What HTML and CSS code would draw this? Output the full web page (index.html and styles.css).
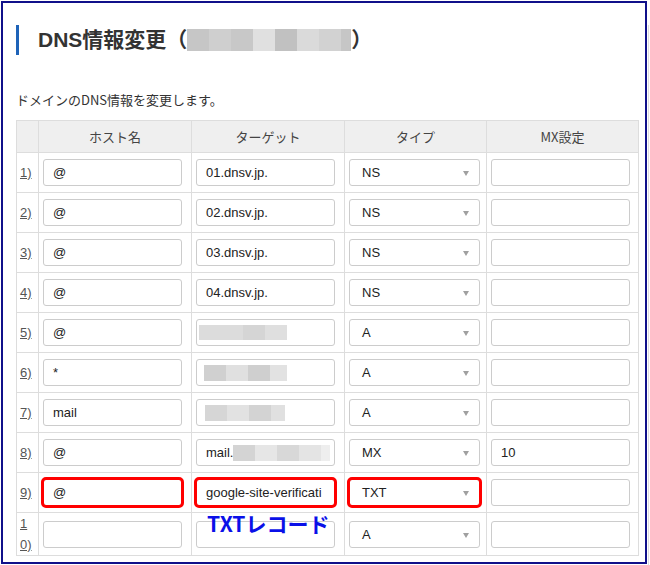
FILE: index.html
```html
<!DOCTYPE html>
<html lang="ja">
<head>
<meta charset="utf-8">
<title>DNS情報変更</title>
<link rel="stylesheet" href="styles.css">
</head>
<body>
<div class="page">
  <h1 class="title">DNS情報変更（<span class="blur blur-title"></span>）</h1>
  <p class="lead">ドメインのDNS情報を変更します。</p>
  <table class="dns">
    <colgroup>
      <col class="c-num"><col class="c-host"><col class="c-target"><col class="c-type"><col class="c-mx">
    </colgroup>
    <thead>
      <tr><th></th><th>ホスト名</th><th>ターゲット</th><th>タイプ</th><th>MX設定</th></tr>
    </thead>
    <tbody>
      <tr>
        <td class="num"><a>1)</a></td>
        <td><div class="field">@</div></td>
        <td><div class="field">01.dnsv.jp.</div></td>
        <td><div class="select">NS</div></td>
        <td><div class="field"></div></td>
      </tr>
      <tr>
        <td class="num"><a>2)</a></td>
        <td><div class="field">@</div></td>
        <td><div class="field">02.dnsv.jp.</div></td>
        <td><div class="select">NS</div></td>
        <td><div class="field"></div></td>
      </tr>
      <tr>
        <td class="num"><a>3)</a></td>
        <td><div class="field">@</div></td>
        <td><div class="field">03.dnsv.jp.</div></td>
        <td><div class="select">NS</div></td>
        <td><div class="field"></div></td>
      </tr>
      <tr>
        <td class="num"><a>4)</a></td>
        <td><div class="field">@</div></td>
        <td><div class="field">04.dnsv.jp.</div></td>
        <td><div class="select">NS</div></td>
        <td><div class="field"></div></td>
      </tr>
      <tr>
        <td class="num"><a>5)</a></td>
        <td><div class="field">@</div></td>
        <td><div class="field field-blur"><span class="blur blur-r5"></span></div></td>
        <td><div class="select">A</div></td>
        <td><div class="field"></div></td>
      </tr>
      <tr>
        <td class="num"><a>6)</a></td>
        <td><div class="field">*</div></td>
        <td><div class="field field-blur"><span class="blur blur-r6"></span></div></td>
        <td><div class="select">A</div></td>
        <td><div class="field"></div></td>
      </tr>
      <tr>
        <td class="num"><a>7)</a></td>
        <td><div class="field">mail</div></td>
        <td><div class="field field-blur"><span class="blur blur-r7"></span></div></td>
        <td><div class="select">A</div></td>
        <td><div class="field"></div></td>
      </tr>
      <tr>
        <td class="num"><a>8)</a></td>
        <td><div class="field">@</div></td>
        <td><div class="field">mail.<span class="blur blur-r8"></span></div></td>
        <td><div class="select">MX</div></td>
        <td><div class="field">10</div></td>
      </tr>
      <tr>
        <td class="num"><a>9)</a></td>
        <td><div class="field hl">@</div></td>
        <td><div class="field hl">google-site-verificati</div></td>
        <td><div class="select hl">TXT</div></td>
        <td><div class="field"></div></td>
      </tr>
      <tr>
        <td class="num"><a>10)</a></td>
        <td><div class="field"></div></td>
        <td class="label-cell"><div class="field"></div><span class="note">TXTレコード</span></td>
        <td><div class="select">A</div></td>
        <td><div class="field"></div></td>
      </tr>
    </tbody>
  </table>
</div>
<div class="frame"></div>
</body>
</html>
```

FILE: styles.css
```css
* { box-sizing: border-box; }

html, body {
  margin: 0;
  padding: 0;
  background: #ffffff;
  overflow: hidden;
}

body {
  width: 650px;
  height: 565px;
  position: relative;
  font-family: "Liberation Sans", Arial, "Noto Sans CJK JP", sans-serif;
  color: #222;
}

.page {
  width: 649px;
  padding-left: 16px;
  border-right: 1px solid #dddddd;
  min-height: 600px;
}

.title {
  margin: 25px 0 0;
  height: 30px;
  line-height: 30px;
  border-left: 3px solid #1e63b8;
  padding-left: 19px;
  font-size: 21px;
  font-weight: bold;
  color: #333;
  display: flex;
  align-items: center;
  white-space: nowrap;
}

.blur {
  display: inline-block;
  vertical-align: middle;
}

.blur-title {
  width: 164px;
  height: 22px;
  background: linear-gradient(90deg,
    #c6c6c6 0 22px, #cfcfcf 22px 44px, #c8c8c8 44px 66px, #e0e0e0 66px 88px,
    #c1c1c1 88px 110px, #dadada 110px 132px, #d2d2d2 132px 154px, #c6c6c6 154px 164px);
}

.lead {
  margin: 35px 0 10px;
  font-size: 13px;
  line-height: 20px;
  color: #333;
  font-family: "Noto Sans CJK JP", sans-serif;
}

.dns {
  width: 622px;
  table-layout: fixed;
  border-collapse: collapse;
  font-size: 13px;
}

.c-num { width: 22px; }
.c-host { width: 153px; }
.c-target { width: 153px; }
.c-type { width: 142px; }
.c-mx { width: 152px; }

.dns th, .dns td {
  border: 1px solid #dddddd;
}

.dns th {
  height: 32px;
  background: #efefef;
  font-weight: normal;
  color: #444;
  font-family: "Noto Sans CJK JP", sans-serif;
  font-size: 13px;
}

.dns td {
  height: 40px;
  padding: 0 4px 0 4px;
  vertical-align: middle;
}

.dns td.num {
  padding: 0 6px 0 3px;
  word-break: break-all;
  line-height: 21px;
  color: #555;
}

.num a {
  text-decoration: underline;
  color: #555;
}

.field, .select {
  height: 27px;
  border: 1px solid #cccccc;
  border-radius: 3px;
  background: #fff;
  font-size: 13px;
  line-height: 25px;
  color: #222;
  white-space: nowrap;
  overflow: hidden;
}

.field {
  width: 139px;
  padding: 0 9px;
}

.field-blur {
  padding: 0 2px;
  display: flex;
  align-items: center;
}

.select {
  width: 131px;
  padding: 0 12px;
  position: relative;
}

.select::after {
  content: "";
  position: absolute;
  right: 10px;
  top: 11px;
  border-left: 3.5px solid transparent;
  border-right: 3.5px solid transparent;
  border-top: 5px solid #a0a0a0;
}

.hl {
  outline: 3px solid #ff0000;
  outline-offset: -1px;
}

.blur-r5 {
  width: 88px;
  height: 15px;
  background: linear-gradient(90deg, #dcdcdc 0 44px, #d5d5d5 44px 66px, #dfdfdf 66px 88px);
}

.blur-r6 {
  margin-left: 5px;
  width: 83px;
  height: 16px;
  background: linear-gradient(90deg, #d0d0d0 0 22px, #e0e0e0 22px 44px, #cfcfcf 44px 66px, #e2e2e2 66px 83px);
}

.blur-r7 {
  margin-left: 6px;
  width: 80px;
  height: 16px;
  background: linear-gradient(90deg, #d6d6d6 0 22px, #e2e2e2 22px 44px, #d3d3d3 44px 66px, #e0e0e0 66px 80px);
}

.blur-r8 {
  width: 97px;
  height: 16px;
  margin-top: -2px;
  background: linear-gradient(90deg, #d4d4d4 0 22px, #e6e6e6 22px 44px, #d8d8d8 44px 66px, #e4e4e4 66px 88px, #eeeeee 88px 97px);
}

.label-cell {
  position: relative;
}

.note {
  position: absolute;
  left: 15px;
  top: -3px;
  font-family: "Noto Sans CJK JP", sans-serif;
  font-weight: bold;
  font-size: 21px;
  line-height: 26px;
  color: #0a10e8;
  white-space: nowrap;
}

.frame {
  position: absolute;
  left: 1px;
  top: 1px;
  width: 646px;
  height: 563px;
  border: 2px solid #10108a;
  pointer-events: none;
}
```
